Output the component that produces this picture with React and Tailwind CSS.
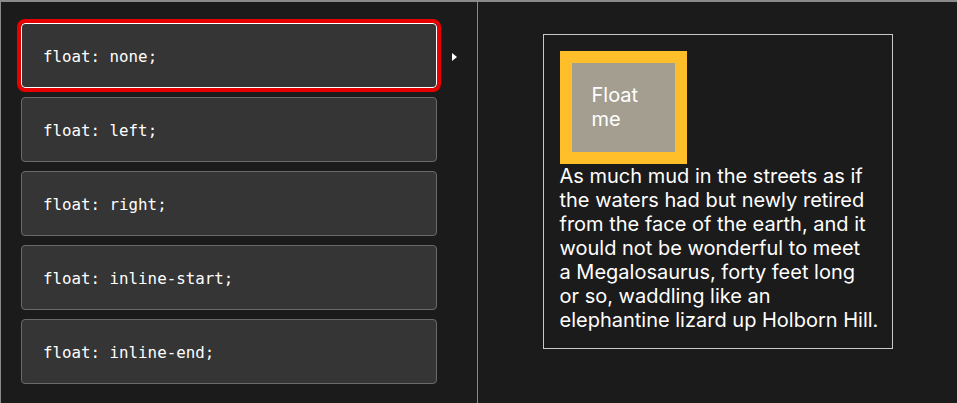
import { useState } from 'react'

const choices = ['none', 'left', 'right', 'inline-start', 'inline-end']

export default function App() {
  const [selected, setSelected] = useState('none')

  return (
    <div className="w-[957px] h-[403px] bg-[#1b1b1b] border-t-2 border-l border-[#8a8a8a] flex overflow-hidden">
      {/* Choices */}
      <div className="w-[477px] border-r border-[#8a8a8a] pl-5 pt-[21px] flex">
        <div className="flex flex-col gap-[9px] w-[416px]">
          {choices.map(c => (
            <button
              key={c}
              onClick={() => setSelected(c)}
              className={
                c === selected
                  ? 'h-[65px] shrink-0 text-left pl-[21px] pt-[2px] bg-[#353535] rounded-[4px] border border-[#ffffff] outline-4 outline-[#e60000] font-["DejaVu_Sans_Mono",monospace] text-[15.8px] text-white'
                  : 'h-[65px] shrink-0 text-left pl-[21px] pt-[2px] bg-[#353535] rounded-[4px] border border-[#6a6a6a] font-["DejaVu_Sans_Mono",monospace] text-[15.8px] text-white'
              }
            >
              float: {c};
            </button>
          ))}
        </div>
        <div className="pl-[15px] pt-[30px]">
          <svg width="5" height="8" viewBox="0 0 5 8">
            <path d="M0 0 L5 4 L0 8 Z" fill="#fff" />
          </svg>
        </div>
      </div>

      {/* Output */}
      <div className="flex-1 flex justify-center pt-[32px]">
        <div className="w-[350px] h-[315px] border border-[#c8c8c8] pl-4 pr-[13px] py-4 font-['Inter',sans-serif] text-[20px] leading-[24px] text-white">
          <div className={floatClass(selected)}>
            <div className="border-[12px] border-[#ffbf2b] bg-[#a39e8f] w-[127px] h-[113px] px-5 pt-[20px]">
              Float me
            </div>
          </div>
          As much mud in the streets as if the waters had but newly retired from the face of the earth, and it would not be wonderful to meet a{'\u00a0'}Megalosaurus, forty feet long or{'\u00a0'}so, waddling like an elephantine lizard up Holborn Hill.
        </div>
      </div>
    </div>
  )
}

function floatClass(v) {
  if (v === 'left' || v === 'inline-start') return 'float-left mr-4'
  if (v === 'right' || v === 'inline-end') return 'float-right ml-4'
  return ''
}
